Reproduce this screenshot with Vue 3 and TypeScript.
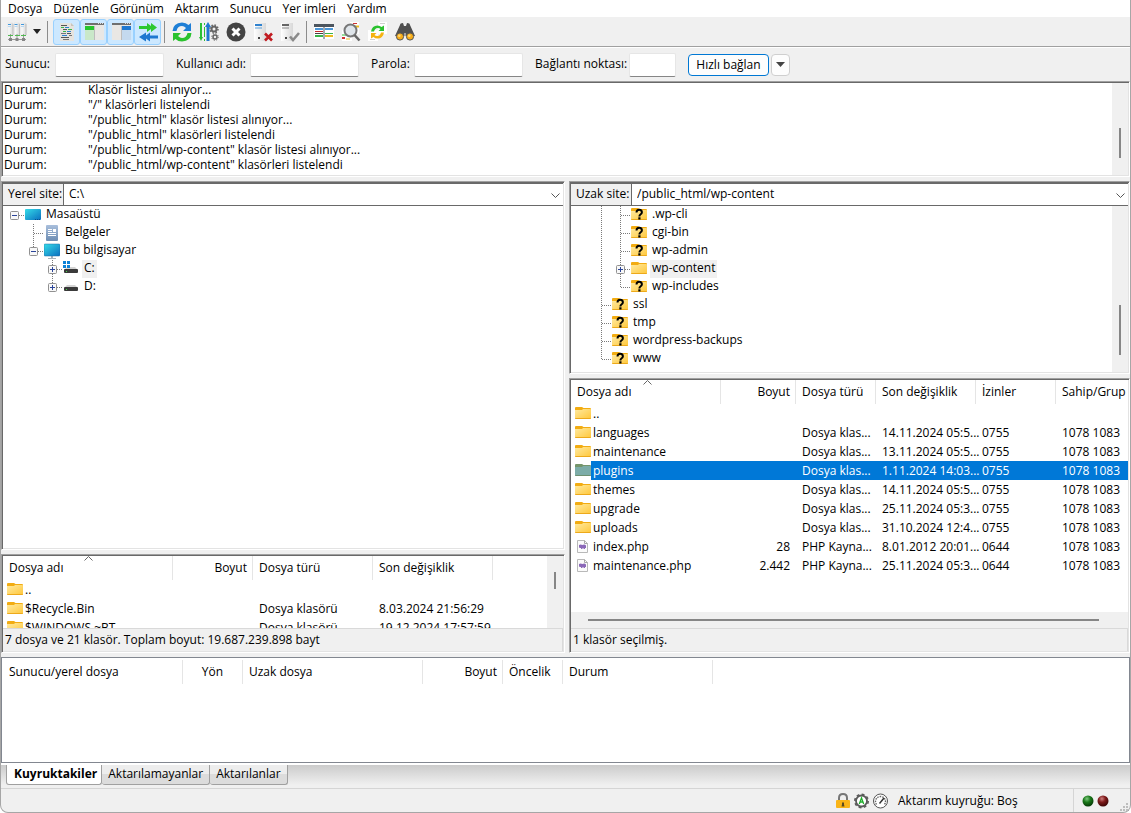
<script setup lang="ts">
import { ref } from 'vue'

interface LogLine { kind: string; text: string }
interface TreeRow {
  guides: string[]
  icon: string
  label: string
  selected?: boolean
}
interface FileRow {
  icon: string
  name: string
  size: string
  type: string
  date: string
  perms?: string
  owner?: string
  selected?: boolean
}

const menus: string[] = ['Dosya', 'Düzenle', 'Görünüm', 'Aktarım', 'Sunucu', 'Yer imleri', 'Yardım']

const toggles = ref([
  { icon: 'log', title: 'Günlük', on: true },
  { icon: 'local', title: 'Yerel klasör ağacı', on: true },
  { icon: 'remote', title: 'Uzak klasör ağacı', on: true },
  { icon: 'queue', title: 'Aktarım kuyruğu', on: true },
])
const actions = [
  { icon: 'refresh', title: 'Yenile' },
  { icon: 'process', title: 'Kuyruğu işle' },
  { icon: 'cancel', title: 'İptal' },
  { icon: 'disconnect', title: 'Bağlantıyı kes' },
  { icon: 'reconnect', title: 'Yeniden bağlan' },
]
const tools = [
  { icon: 'filter', title: 'Süzgeçler' },
  { icon: 'compare', title: 'Karşılaştır' },
  { icon: 'sync', title: 'Eşzamanlı gezinme' },
  { icon: 'find', title: 'Ara' },
]

const fields = [
  { id: 'host', label: 'Sunucu:', type: 'text' },
  { id: 'user', label: 'Kullanıcı adı:', type: 'text' },
  { id: 'pass', label: 'Parola:', type: 'password' },
  { id: 'port', label: 'Bağlantı noktası:', type: 'text' },
]

const log: LogLine[] = [
  { kind: 'Durum:', text: 'Klasör listesi alınıyor...' },
  { kind: 'Durum:', text: '"/" klasörleri listelendi' },
  { kind: 'Durum:', text: '"/public_html" klasör listesi alınıyor...' },
  { kind: 'Durum:', text: '"/public_html" klasörleri listelendi' },
  { kind: 'Durum:', text: '"/public_html/wp-content" klasör listesi alınıyor...' },
  { kind: 'Durum:', text: '"/public_html/wp-content" klasörleri listelendi' },
]

const localTree: TreeRow[] = [
  { guides: ['minus-root'], icon: 'desktop', label: 'Masaüstü' },
  { guides: ['none', 'tee'], icon: 'docs', label: 'Belgeler' },
  { guides: ['none', 'minus-end'], icon: 'pc', label: 'Bu bilgisayar' },
  { guides: ['none', 'none', 'plus-tee'], icon: 'drivec', label: 'C:', selected: true },
  { guides: ['none', 'none', 'plus-end'], icon: 'drived', label: 'D:' },
]
const remoteTree: TreeRow[] = [
  { guides: ['line', 'tee'], icon: 'unknown', label: '.wp-cli' },
  { guides: ['line', 'tee'], icon: 'unknown', label: 'cgi-bin' },
  { guides: ['line', 'tee'], icon: 'unknown', label: 'wp-admin' },
  { guides: ['line', 'plus-tee'], icon: 'folder', label: 'wp-content', selected: true },
  { guides: ['line', 'end'], icon: 'unknown', label: 'wp-includes' },
  { guides: ['tee'], icon: 'unknown', label: 'ssl' },
  { guides: ['tee'], icon: 'unknown', label: 'tmp' },
  { guides: ['tee'], icon: 'unknown', label: 'wordpress-backups' },
  { guides: ['end'], icon: 'unknown', label: 'www' },
]

const localFiles: FileRow[] = [
  { icon: 'folder', name: '..', size: '', type: '', date: '' },
  { icon: 'folder', name: '$Recycle.Bin', size: '', type: 'Dosya klasörü', date: '8.03.2024 21:56:29' },
  { icon: 'folder', name: '$WINDOWS.~BT', size: '', type: 'Dosya klasörü', date: '19.12.2024 17:57:59' },
]
const dir = 'Dosya klas...'
const php = 'PHP Kayna...'
const owner = '1078 1083'
const remoteFiles: FileRow[] = [
  { icon: 'folder', name: '..', size: '', type: '', date: '' },
  { icon: 'folder', name: 'languages', size: '', type: dir, date: '14.11.2024 05:5...', perms: '0755', owner },
  { icon: 'folder', name: 'maintenance', size: '', type: dir, date: '13.11.2024 05:5...', perms: '0755', owner },
  { icon: 'folder-sel', name: 'plugins', size: '', type: dir, date: '1.11.2024 14:03...', perms: '0755', owner, selected: true },
  { icon: 'folder', name: 'themes', size: '', type: dir, date: '14.11.2024 05:5...', perms: '0755', owner },
  { icon: 'folder', name: 'upgrade', size: '', type: dir, date: '25.11.2024 05:3...', perms: '0755', owner },
  { icon: 'folder', name: 'uploads', size: '', type: dir, date: '31.10.2024 12:4...', perms: '0755', owner },
  { icon: 'php', name: 'index.php', size: '28', type: php, date: '8.01.2012 20:01...', perms: '0644', owner },
  { icon: 'php', name: 'maintenance.php', size: '2.442', type: php, date: '25.11.2024 05:3...', perms: '0644', owner },
]

const tabs = ['Kuyruktakiler', 'Aktarılamayanlar', 'Aktarılanlar']
const activeTab = ref(0)
</script>

<template>
  <svg class="defs" width="0" height="0" aria-hidden="true">
    <defs>
      <linearGradient id="g-folder" x1="0" y1="0" x2="1" y2="1">
        <stop offset="0" stop-color="#ffeaa0" /><stop offset="1" stop-color="#ffc73a" />
      </linearGradient>
      <linearGradient id="g-screen" x1="0" y1="0" x2="1" y2="1">
        <stop offset="0" stop-color="#35dce8" /><stop offset="1" stop-color="#0a6fc0" />
      </linearGradient>
      <linearGradient id="g-doc" x1="0" y1="0" x2="0" y2="1">
        <stop offset="0" stop-color="#a9bfdc" /><stop offset="1" stop-color="#6d8db3" />
      </linearGradient>
      <radialGradient id="g-green" cx=".4" cy=".3" r=".7">
        <stop offset="0" stop-color="#7fc87f" /><stop offset=".45" stop-color="#1b7a1b" /><stop offset="1" stop-color="#063a06" />
      </radialGradient>
      <radialGradient id="g-red" cx=".4" cy=".3" r=".7">
        <stop offset="0" stop-color="#cf8080" /><stop offset=".45" stop-color="#7f1b1b" /><stop offset="1" stop-color="#3c0505" />
      </radialGradient>
      <linearGradient id="g-server" x1="0" y1="0" x2="1" y2="0">
        <stop offset="0" stop-color="#ffffff" /><stop offset="1" stop-color="#d8d8d8" />
      </linearGradient>
    </defs>

    <symbol id="i-folder" viewBox="0 0 16 16">
      <path d="M0 2q0-1 1-1h6l1.500 1H15q1 0 1 1v3H0z" fill="#f2ac12" />
      <path d="M0 4h7l1-1h7.500l.5.500V12q0 1-1 1H1q-1 0-1-1z" fill="url(#g-folder)" />
      <path d="M0 12h16q0 1-1 1H1q-1 0-1-1z" fill="#eda91a" />
    </symbol>
    <symbol id="i-folder-sel" viewBox="0 0 16 16">
      <path d="M0 2q0-1 1-1h6l1.500 1H15q1 0 1 1v3H0z" fill="#75956b" />
      <path d="M0 4h7l1-1h7.500l.5.500V12q0 1-1 1H1q-1 0-1-1z" fill="#7caca8" />
      <path d="M0 12h16q0 1-1 1H1q-1 0-1-1z" fill="#6d9070" />
    </symbol>
    <symbol id="i-unknown" viewBox="0 0 16 16">
      <use href="#i-folder" />
      <path d="M5.500 5.500Q5.500 2.700 8.200 2.700t2.700 2.500q0 1.400-1.500 2.300-1 .7-1 2" fill="none" stroke="#000" stroke-width="2" />
      <rect x="7.300" y="10.300" width="2.200" height="2.200" />
    </symbol>
    <symbol id="i-desktop" viewBox="0 0 16 16">
      <rect x="0" y="2" width="16" height="11" rx="1" fill="url(#g-screen)" />
      <path d="M10 12.500h1m1 0h1m1 0h1" stroke="#0a4f88" />
    </symbol>
    <symbol id="i-pc" viewBox="0 0 16 16">
      <path d="M7 13h2v2h3v1H4v-1h3z" fill="#a9b4bd" />
      <rect x="0" y="1" width="16" height="12" rx="1" fill="url(#g-screen)" stroke="#1c6ea5" stroke-width=".5" />
    </symbol>
    <symbol id="i-docs" viewBox="0 0 16 16">
      <rect x="2" y="0" width="12" height="16" rx="1" fill="url(#g-doc)" />
      <path d="M4 4.500h4M4 6.500h4M4 8.500h8M4 10.500h8" stroke="#fff" />
      <rect x="9" y="4" width="3" height="3" fill="#fff" />
    </symbol>
    <symbol id="i-drived" viewBox="0 0 16 16">
      <path d="M4 6h8l3 3H1z" fill="#d4d4d4" />
      <rect x="1" y="8" width="14" height="4" rx="1" fill="#3a3a3a" />
      <rect x="3" y="10" width="1" height="1" fill="#47d847" />
    </symbol>
    <symbol id="i-drivec" viewBox="0 0 16 16">
      <use href="#i-drived" />
      <path d="M0 0h3v3H0zM4 0h3v3H4zM0 4h3v3H0zM4 4h3v3H4z" fill="#0c82d8" />
    </symbol>
    <symbol id="i-php" viewBox="0 0 16 16">
      <path d="M2.500 1.500h7l3 3v9h-10z" fill="#fbfbfb" stroke="#b9b9b9" />
      <path d="M9.500 1.500v3h3" fill="none" stroke="#a8a8a8" />
      <path d="M4 6q1.500-1 3.500 0 2-1 3.500.5V9h-1v1H8.500V9h-1v1H6V9H5Q4 9 4 8z" fill="#8b68b8" />
    </symbol>

    <symbol id="i-sites" viewBox="0 0 20 20">
      <g fill="url(#g-server)" stroke="#dcdcdc" stroke-width=".5">
        <rect x="1" y="1" width="5" height="12" /><rect x="7.500" y="1" width="5" height="12" /><rect x="14" y="1" width="5" height="12" />
      </g>
      <path d="M1 2.500h3M7.500 2.500h3M14 2.500h3" stroke="#3f97dc" />
      <path d="M1 4.500h3M7.500 4.500h3M14 4.500h3" stroke="#b5d5ef" />
      <path d="M6 2v11M12.500 2v11M19 2v11" stroke="#bdbdbd" />
      <path d="M3.500 12v6M10 12v6M16.500 12v6M1 17.500h18" stroke="#9a9a9a" fill="none" />
      <path d="M1 13.500h5M8 13.500h5M14 13.500h5" stroke="#50ba50" />
      <path d="M2 16h3v3H2zM8.500 16h3v3h-3zM15 16h3v3h-3z" fill="#858585" />
    </symbol>
    <symbol id="i-log" viewBox="0 0 20 20">
      <path d="M3 1h11l3 3v15H3z" fill="#e6e3de" />
      <path d="M14 1v3h3" fill="#c9c4bc" />
      <path d="M4 3.500h6M6 7.500h4M10 11.500h4M4 15.500h8" stroke="#555" />
      <path d="M4 5.500h3M11 7.500h4M6 9.500h3" stroke="#39b54a" />
      <path d="M8 5.500h4M10 9.500h4M5 13.500h5" stroke="#2f7fcb" />
      <path d="M4 11.500h5M12 13.500h3M6 17.500h6" stroke="#777" />
    </symbol>
    <symbol id="i-local" viewBox="0 0 20 20">
      <rect x="1" y="1" width="19" height="17" fill="#e9e7e4" />
      <rect x="1" y="1" width="19" height="2" fill="#6f6f6f" />
      <path d="M14 1.500h1m1 0h1m1 0h1" stroke="#ddd" />
      <rect x="1" y="4" width="9" height="4" fill="#26c52e" />
      <rect x="1" y="8" width="9" height="10" fill="#c9e8c9" />
      <rect x="10" y="4" width="1" height="14" fill="#bdbdbd" />
    </symbol>
    <symbol id="i-remote" viewBox="0 0 20 20">
      <rect x="1" y="1" width="19" height="17" fill="#e9e7e4" />
      <rect x="1" y="1" width="19" height="2" fill="#6f6f6f" />
      <path d="M14 1.500h1m1 0h1m1 0h1" stroke="#ddd" />
      <rect x="11" y="4" width="9" height="4" fill="#1f78d0" />
      <rect x="11" y="8" width="9" height="10" fill="#c4d9ee" />
      <rect x="10" y="4" width="1" height="14" fill="#bdbdbd" />
    </symbol>
    <symbol id="i-queue" viewBox="0 0 20 20">
      <path d="M1 4h8V1l4 3V1l6 4.500-6 4.500V7l-4 3V7H1z" fill="#2cc830" />
      <path d="M20 13.500h-8v-3l-4 3v-3L1 15l7 4.500v-3l4 3v-3h8z" fill="#1f78d0" />
    </symbol>
    <symbol id="i-refresh" viewBox="0 0 20 20">
      <path d="M.5 9Q1 1 10 .5q4 0 6.500 2.500L19 1v8h-8l3-3Q12 4 10 4 5.500 4 4.500 9z" fill="#1f7fd6" />
      <path d="M19.500 11Q19 19 10 19.500q-4 0-6.500-2.500L1 19v-8h8l-3 3q2 2 4 2 4.500 0 5.500-5z" fill="#2bc22f" />
    </symbol>
    <symbol id="i-process" viewBox="0 0 20 20">
      <path d="M2 1v15" stroke="#2bbf35" stroke-width="2" /><path d="M0 15h4l-2 4z" fill="#2bbf35" />
      <path d="M5.500 1v2m0 2v10m0 2v2" stroke="#2bbf35" />
      <path d="M9 4v15" stroke="#1f78d0" stroke-width="3" /><path d="M6 5l3-5 3 5z" fill="#1f78d0" />
      <circle cx="15" cy="7" r="2.500" fill="none" stroke="#656565" stroke-width="2" />
      <circle cx="15" cy="7" r="4" fill="none" stroke="#656565" stroke-width="1.500" stroke-dasharray="1.500 1.640" />
      <circle cx="16" cy="15" r="2" fill="none" stroke="#656565" stroke-width="1.500" />
      <circle cx="16" cy="15" r="3.300" fill="none" stroke="#656565" stroke-dasharray="1.200 1.400" />
    </symbol>
    <symbol id="i-cancel" viewBox="0 0 20 20">
      <circle cx="10" cy="10" r="9.500" fill="#444" />
      <path d="M6.500 6.500l7 7m0-7l-7 7" stroke="#fff" stroke-width="3" />
    </symbol>
    <symbol id="i-disconnect" viewBox="0 0 20 20">
      <rect x="1" y="1" width="12" height="18" fill="url(#g-server)" />
      <path d="M2 3h7" stroke="#2f82cf" stroke-width="2" /><path d="M2 6h7" stroke="#5b9fd9" />
      <rect x="5" y="15" width="2" height="2" fill="#444" />
      <path d="M12 11.500l7 7m0-7l-7 7" stroke="#c11a20" stroke-width="2.600" />
    </symbol>
    <symbol id="i-reconnect" viewBox="0 0 20 20">
      <rect x="1" y="1" width="12" height="18" fill="url(#g-server)" />
      <path d="M2 3h7" stroke="#666" stroke-width="2" /><path d="M2 6h7" stroke="#888" />
      <rect x="5" y="15" width="2" height="2" fill="#444" />
      <path d="M10 14.500l3 3.500 6-7" fill="none" stroke="#8a8a8a" stroke-width="2.600" />
    </symbol>
    <symbol id="i-filter" viewBox="0 0 20 20">
      <rect x="0" y="3" width="20" height="14" fill="#fff" />
      <rect x="0" y="2" width="20" height="3" fill="#4d555e" />
      <path d="M1 7h8" stroke="#4b96d8" stroke-width="2" /><path d="M1 9.500h8" stroke="#c22a2a" />
      <path d="M1 11.500h8" stroke="#444" /><path d="M1 14h8" stroke="#39b54a" stroke-width="2" />
      <path d="M11 7h8" stroke="#4b96d8" stroke-width="2" /><path d="M11 11.500h8" stroke="#39b54a" /><path d="M11 14h8" stroke="#eab91e" stroke-width="2" />
      <path d="M10 4v13" stroke="#4d555e" />
    </symbol>
    <symbol id="i-compare" viewBox="0 0 20 20">
      <rect x="9" y="0" width="9" height="12" fill="#fff" /><rect x="1" y="8" width="10" height="11" fill="#fff" />
      <path d="M12 1.500h4" stroke="#d33232" /><path d="M13 4.500h5" stroke="#eab91e" stroke-width="2" />
      <path d="M1 13h5" stroke="#2bbf35" /><path d="M1 16h3" stroke="#d33232" stroke-width="2" /><path d="M5 17h4" stroke="#eab91e" />
      <circle cx="9.500" cy="8.500" r="6" fill="#dfe5ea" stroke="#777" stroke-width="2" />
      <path d="M13.500 13l5 5.500" stroke="#666" stroke-width="2.600" />
    </symbol>
    <symbol id="i-sync" viewBox="0 0 20 20">
      <rect x="10" y="0" width="9" height="12" fill="#fff" /><rect x="0" y="8" width="10" height="11" fill="#fff" />
      <path d="M2 17.500h5M12 1.500h5" stroke="#cfcfcf" />
      <path d="M3 9.500Q4 3.500 9.500 3.500q2.500 0 4 1.500L16 3.500V9h-5.500l2-2q-1-1-3-1-2.500 0-3.500 3.500z" fill="#2bc22f" />
      <path d="M16 10.500q-1 6-6.500 6-2.500 0-4-1.500L3 16.500V11h5.500l-2 2q1 1 3 1 2.500 0 3.500-3.500z" fill="#f5b312" />
    </symbol>
    <symbol id="i-find" viewBox="0 0 20 20">
      <path d="M5 3q0-2 3-2l1 3h2l1-3q3 0 3 2l5 11H10.500v-3h-1v3H0z" fill="#505050" />
      <circle cx="5" cy="14.500" r="3.600" fill="#f8ae1a" stroke="#555" /><circle cx="15" cy="14.500" r="3.600" fill="#f8ae1a" stroke="#555" />
      <circle cx="4.300" cy="13.800" r="1.300" fill="#ffd773" /><circle cx="14.300" cy="13.800" r="1.300" fill="#ffd773" />
    </symbol>
  </svg>

  <div class="window">
    <nav class="menubar" aria-label="Menü">
      <button v-for="m in menus" :key="m" type="button">{{ m }}</button>
    </nav>

    <div class="toolbar" role="toolbar">
      <button class="tool" type="button" title="Site yöneticisi"><svg class="ico"><use href="#i-sites" /></svg></button>
      <button class="tool drop" type="button" title="Siteler">
        <svg width="8" height="5" viewBox="0 0 8 5"><path d="M0 0h8L4 5z" fill="#222" /></svg>
      </button>
      <i class="sep first"></i>
      <button
        v-for="t in toggles" :key="t.icon" class="tool toggle" :class="{ on: t.on }"
        type="button" :title="t.title" :aria-pressed="t.on" @click="t.on = !t.on"
      ><svg class="ico"><use :href="'#i-' + t.icon" /></svg></button>
      <i class="sep"></i>
      <button v-for="t in actions" :key="t.icon" class="tool" type="button" :title="t.title">
        <svg class="ico"><use :href="'#i-' + t.icon" /></svg>
      </button>
      <i class="sep"></i>
      <button v-for="t in tools" :key="t.icon" class="tool" type="button" :title="t.title">
        <svg class="ico"><use :href="'#i-' + t.icon" /></svg>
      </button>
    </div>

    <form class="quick" @submit.prevent>
      <div v-for="f in fields" :key="f.id" class="field" :class="f.id">
        <label :for="f.id">{{ f.label }}</label>
        <input :id="f.id" :type="f.type">
      </div>
      <button class="connect" type="submit">Hızlı bağlan</button>
      <button class="history" type="button" title="Geçmiş">
        <svg width="9" height="5" viewBox="0 0 9 5"><path d="M0 0h9L4.500 5z" fill="#444" /></svg>
      </button>
    </form>

    <section class="sunken log">
      <div class="lines">
        <p v-for="(l, i) in log" :key="i"><span>{{ l.kind }}</span>{{ l.text }}</p>
      </div>
      <div class="vscroll"><i class="thumb log-thumb"></i></div>
    </section>

    <main class="panes">
      <div class="side local">
        <section class="sunken pane">
          <div class="sitebar">
            <label for="local-path">Yerel site:</label>
            <div class="combo">
              <select id="local-path"><option>C:\</option></select>
              <svg class="chev" width="9" height="5" viewBox="0 0 9 5"><path d="M.5.500l4 4 4-4" fill="none" stroke="#555" /></svg>
            </div>
          </div>
          <div class="body">
            <ul class="tree">
              <li v-for="r in localTree" :key="r.label">
                <svg v-for="(g, i) in r.guides" :key="i" class="guide" viewBox="0 0 19 18">
                  <g stroke="#7a7a7a" stroke-dasharray="1 1">
                    <path v-if="g === 'line' || g === 'tee' || g === 'plus-tee'" d="M9.500 0v18" />
                    <path v-if="g === 'end' || g === 'plus-end' || g === 'minus-end'" d="M9.500 0v9" />
                    <path v-if="g !== 'line' && g !== 'none'" d="M10 9.500h9" />
                  </g>
                  <template v-if="g.startsWith('plus') || g.startsWith('minus')">
                    <rect x="5.500" y="5.500" width="8" height="8" rx="1" fill="#f8f8f8" stroke="#919191" />
                    <path d="M7 9.500h5" stroke="#2b459a" />
                    <path v-if="g.startsWith('plus')" d="M9.500 7v5" stroke="#2b459a" />
                  </template>
                </svg>
                <svg class="node"><use :href="'#i-' + r.icon" /></svg>
                <span :class="{ sel: r.selected }">{{ r.label }}</span>
              </li>
            </ul>
          </div>
        </section>

        <section class="sunken pane">
          <div class="body">
            <div class="scroller">
              <table>
                <colgroup><col class="w170"><col class="w80"><col class="w120"><col class="w120"><col></colgroup>
                <thead>
                  <tr>
                    <th>Dosya adı<svg class="sort" width="9" height="5" viewBox="0 0 9 5"><path d="M.5 4.500l4-4 4 4" fill="none" stroke="#666" /></svg></th>
                    <th class="num">Boyut</th><th>Dosya türü</th><th>Son değişiklik</th><th class="rest"></th>
                  </tr>
                </thead>
                <tbody>
                  <tr v-for="f in localFiles" :key="f.name">
                    <td class="name"><div><svg class="node"><use :href="'#i-' + f.icon" /></svg><span>{{ f.name }}</span></div></td>
                    <td class="num">{{ f.size }}</td><td>{{ f.type }}</td><td>{{ f.date }}</td><td></td>
                  </tr>
                </tbody>
              </table>
            </div>
            <div class="vscroll"><i class="thumb list-thumb"></i></div>
          </div>
          <p class="summary">7 dosya ve 21 klasör. Toplam boyut: 19.687.239.898 bayt</p>
        </section>
      </div>

      <div class="side remote">
        <section class="sunken pane">
          <div class="sitebar">
            <label for="remote-path">Uzak site:</label>
            <div class="combo">
              <select id="remote-path"><option>/public_html/wp-content</option></select>
              <svg class="chev" width="9" height="5" viewBox="0 0 9 5"><path d="M.5.500l4 4 4-4" fill="none" stroke="#555" /></svg>
            </div>
          </div>
          <div class="body">
            <ul class="tree deep">
              <li v-for="r in remoteTree" :key="r.label">
                <svg v-for="(g, i) in r.guides" :key="i" class="guide" viewBox="0 0 19 18">
                  <g stroke="#7a7a7a" stroke-dasharray="1 1">
                    <path v-if="g === 'line' || g === 'tee' || g === 'plus-tee'" d="M9.500 0v18" />
                    <path v-if="g === 'end'" d="M9.500 0v9" />
                    <path v-if="g !== 'line' && g !== 'none'" d="M10 9.500h9" />
                  </g>
                  <template v-if="g.startsWith('plus')">
                    <rect x="5.500" y="5.500" width="8" height="8" rx="1" fill="#f8f8f8" stroke="#919191" />
                    <path d="M7 9.500h5M9.500 7v5" stroke="#2b459a" />
                  </template>
                </svg>
                <svg class="node"><use :href="'#i-' + r.icon" /></svg>
                <span :class="{ sel: r.selected }">{{ r.label }}</span>
              </li>
            </ul>
            <div class="vscroll"><i class="thumb tree-thumb"></i></div>
          </div>
        </section>

        <section class="sunken pane">
          <div class="body">
            <div class="scroller">
              <table>
                <colgroup><col class="w150"><col class="w75"><col class="w80"><col class="w100"><col class="w80"><col></colgroup>
                <thead>
                  <tr>
                    <th>Dosya adı<svg class="sort" width="9" height="5" viewBox="0 0 9 5"><path d="M.5 4.500l4-4 4 4" fill="none" stroke="#666" /></svg></th>
                    <th class="num">Boyut</th><th>Dosya türü</th><th>Son değişiklik</th><th>İzinler</th><th class="rest">Sahip/Grup</th>
                  </tr>
                </thead>
                <tbody>
                  <tr v-for="f in remoteFiles" :key="f.name" :class="{ picked: f.selected }">
                    <td class="name"><div><svg class="node"><use :href="'#i-' + f.icon" /></svg><span>{{ f.name }}</span></div></td>
                    <td class="num">{{ f.size }}</td><td>{{ f.type }}</td><td>{{ f.date }}</td>
                    <td>{{ f.perms }}</td><td>{{ f.owner }}</td>
                  </tr>
                </tbody>
              </table>
            </div>
          </div>
          <div class="hscroll"><i></i></div>
          <p class="summary">1 klasör seçilmiş.</p>
        </section>
      </div>
    </main>

    <section class="transfers">
      <table>
        <colgroup><col class="w180"><col class="w60"><col class="w180"><col class="w80"><col class="w60"><col class="w150"><col></colgroup>
        <thead>
          <tr>
            <th>Sunucu/yerel dosya</th><th class="mid">Yön</th><th>Uzak dosya</th><th class="num">Boyut</th>
            <th>Öncelik</th><th>Durum</th><th class="rest"></th>
          </tr>
        </thead>
      </table>
    </section>

    <div class="tabs" role="tablist">
      <button
        v-for="(t, i) in tabs" :key="t" type="button" role="tab"
        :aria-selected="activeTab === i" :class="{ active: activeTab === i }" @click="activeTab = i"
      >{{ t }}</button>
    </div>

    <footer class="statusbar">
      <svg width="54" height="16" viewBox="0 0 54 16">
        <path d="M4 7V5q0-4 4-4t4 4v2" fill="none" stroke="#777" stroke-width="2" />
        <rect x="1" y="7" width="14" height="8" rx="1" fill="#f9b418" />
        <path d="M7 9.500h2v2l.5 2h-3l.5-2z" fill="#5a4a20" />
        <circle cx="26.500" cy="8" r="5.500" fill="#fff" stroke="#5a5a5a" stroke-width="1.800" />
        <circle cx="26.500" cy="8" r="6.700" fill="none" stroke="#5a5a5a" stroke-width="1.600" stroke-dasharray="2.800 2.460" />
        <path d="M24.300 11l2.200-6 2.200 6m-3.500-2h2.600" fill="none" stroke="#1fae2c" stroke-width="1.300" />
        <circle cx="45.500" cy="8" r="7" fill="#fff" stroke="#555" />
        <path d="M41.500 11.500a5 5 0 1 1 8 0" fill="none" stroke="#666" stroke-width="1.400" stroke-dasharray="1.500 1" />
        <path d="M44.500 10.500L49 5" stroke="#333" stroke-width="1.500" />
      </svg>
      <span class="queue-state">Aktarım kuyruğu: Boş</span>
      <svg class="leds" width="28" height="12" viewBox="0 0 28 12">
        <circle cx="6" cy="6" r="5.500" fill="url(#g-green)" /><circle cx="21" cy="6" r="5.500" fill="url(#g-red)" />
      </svg>
      <svg class="grip" width="9" height="9" viewBox="0 0 9 9">
        <path d="M6 0h2v2H6zM3 3h2v2H3zM6 3h2v2H6zM0 6h2v2H0zM3 6h2v2H3zM6 6h2v2H6z" fill="#bdbdbd" />
      </svg>
    </footer>
  </div>
</template>

<style>
html, body { background: #fff; }
</style>

<style scoped>
.defs { position: absolute; }
.window {
  box-sizing: border-box;
  display: flex;
  flex-direction: column;
  height: 100vh;
  min-height: 640px;
  min-width: 900px;
  border: solid #a6a6a6;
  border-width: 0 1px 1px;
  border-radius: 0 0 8px 8px;
  overflow: hidden;
  background: #f0f0f0;
  color: #000;
  font: 12px/16px "Open Sans", "Noto Sans", sans-serif;
}
button, input, select { font: inherit; color: inherit; margin: 0; }
button { padding: 0; border: 0; background: none; }
p, ul { margin: 0; padding: 0; list-style: none; }
svg { flex: none; display: block; }

.menubar { display: flex; gap: 11px; height: 17px; padding-left: 7px; background: #fff; }

.toolbar { display: flex; align-items: center; height: 29px; padding: 0 2px; border-bottom: 1px solid #a0a0a0; }
.tool { display: flex; align-items: center; justify-content: center; width: 27px; height: 26px; box-sizing: border-box; }
.tool.drop { width: 14px; }
.toggle.on { border: 1px solid #99d1ff; border-radius: 3px; background: #cce8ff; }
.sep { width: 1px; height: 22px; margin: 0 3px; background: #8c8c8c; }
.sep.first { margin-right: 5px; }
.ico { width: 20px; height: 20px; }

.quick { display: flex; align-items: center; height: 33px; padding-left: 4px; border-top: 1px solid #fff; }
.field { display: flex; align-items: center; margin-right: 12px; }
.field label { white-space: nowrap; width: 50px; padding-bottom: 2px; }
.field.user label { width: 74px; }
.field.pass label { width: 43px; }
.field.port label { width: 94px; }
.field input {
  box-sizing: border-box; width: 109px; height: 24px; padding: 2px 4px;
  border: 1px solid #e6e6e6; border-bottom-color: #868686; border-radius: 2px; background: #fff;
}
.field.port input { width: 47px; }
.connect { width: 81px; height: 22px; border: 1px solid #0078d4; border-radius: 4px; background: #fdfdfd; white-space: nowrap; box-sizing: border-box; }
.history {
  display: flex; align-items: center; justify-content: center; box-sizing: border-box;
  width: 19px; height: 22px; margin-left: 2px; border: 1px solid #cfcfcf; border-radius: 4px; background: #fdfdfd;
}

.sunken {
  box-sizing: border-box; padding: 1px; border: 1px solid; border-color: #a0a0a0 #fff #fff #a0a0a0;
  background: #fff; box-shadow: inset 1px 1px #696969, inset -1px -1px #e3e3e3;
}
.log { display: flex; flex: none; margin-bottom: 4px; }
.lines { flex: 1; padding-bottom: 2px; }
.lines p { display: flex; line-height: 13px; padding: 0 0 2px 1px; white-space: pre; }
.lines span { width: 84px; }
.vscroll { flex: none; width: 16px; background: #f0f0f0; }
.thumb { display: block; width: 2px; margin: 0 auto; background: #868686; }
.log-thumb { height: 30px; margin-top: 45px; }
.tree-thumb { height: 50px; margin-top: 99px; }
.list-thumb { height: 17px; margin-top: 16px; }

.panes { flex: 1; min-height: 0; display: grid; grid-template-columns: 564fr 561fr; gap: 4px; margin-bottom: 4px; }
.side { display: grid; gap: 4px; min-height: 0; min-width: 0; }
.local { grid-template-rows: minmax(0, 1fr) 99px; }
.remote { grid-template-rows: 193fr 275fr; }
.pane { display: flex; flex-direction: column; min-height: 0; min-width: 0; overflow: hidden; }
.sitebar { display: flex; flex: none; height: 23px; border: solid #696969; border-width: 1px 0; box-sizing: border-box; }
.sitebar label { flex: none; width: 61px; padding-left: 5px; line-height: 20px; background: #f0f0f0; border-right: 1px solid #696969; box-sizing: border-box; white-space: nowrap; }
.combo { position: relative; flex: 1; display: flex; }
.combo select { flex: 1; border: 0; padding: 0 20px 2px 5px; background: #fff; appearance: none; outline: 0; }
.chev { position: absolute; right: 3px; top: 9px; pointer-events: none; }
.body { flex: 1; display: flex; min-height: 0; }
.scroller { flex: 1; min-width: 0; overflow: hidden; }

.tree { flex: 1; overflow: hidden; padding-left: 2px; }
.tree.deep { padding-left: 21px; }
.tree li { display: flex; align-items: center; height: 18px; }
.guide { width: 19px; height: 18px; }
.node { width: 16px; height: 16px; }
.tree .node { margin: 0 3px 0 1px; }
.tree span { padding: 0 2px 2px; line-height: 16px; }
.tree .sel { background: #f0f0f0; }

table { width: 100%; table-layout: fixed; border-collapse: separate; border-spacing: 0; }
th, td { padding: 0 0 0 6px; text-align: left; font-weight: 400; white-space: nowrap; }
th { position: relative; height: 24px; box-sizing: border-box; border-right: 1px solid #e5e5e5; }
th.rest { border-right: 0; }
td { height: 19px; line-height: 19px; }
th.num { padding-right: 5px; text-align: right; }
td.num { padding-right: 6px; text-align: right; }
th.mid { padding: 0; text-align: center; }
td.name { padding: 0; }
.name div { display: flex; align-items: center; height: 19px; padding-left: 4px; }
.name span { flex: 1; padding-left: 2px; }
.picked td { background: #0078d7; color: #fff; }
.picked td.name { background: none; }
.picked .name span { background: #0078d7; }
.sort { position: absolute; top: 0; left: 48%; }
.w60 { width: 60px; } .w75 { width: 75px; } .w80 { width: 80px; } .w100 { width: 100px; }
.w120 { width: 120px; } .w150 { width: 150px; } .w170 { width: 170px; } .w180 { width: 180px; }

.hscroll { flex: none; height: 16px; padding: 7px 29px 7px 17px; background: #f0f0f0; box-sizing: border-box; }
.hscroll i { display: block; height: 2px; background: #868686; }
.summary { flex: none; height: 22px; padding-left: 2px; line-height: 22px; background: #f0f0f0; border-top: 1px solid #d9d9d9; box-shadow: inset -1px 0 #d9d9d9; }

.transfers { flex: none; height: 106px; padding: 2px 0 0 1px; box-sizing: border-box; border: 1px solid #828790; background: #fff; }
.tabs { display: flex; flex: none; height: 26px; padding: 2px 5px 3px; box-sizing: border-box; background: linear-gradient(#fff 0 2px, #cbcbcb 2px, #f0f0f0 22px); border-bottom: 1px solid #d5d5d5; }
.tabs button { padding: 0 6px 2px; border: 1px solid #a0a0a0; border-top: 0; border-left-width: 0; border-radius: 0 0 3px 3px; background: linear-gradient(#ededed 45%, #dcdcdc 50%); white-space: nowrap; }
.tabs button.active { padding: 0 4px 2px 7px; border-left-width: 1px; background: #fff; font-weight: 700; }

.statusbar { display: flex; flex: none; align-items: center; justify-content: flex-end; height: 23px; }
.queue-state { padding: 1px 0 0 9px; width: 175px; border-right: 1px solid #d5d5d5; line-height: 22px; }
.leds { margin: 0 10px 0 8px; }
.grip { align-self: flex-end; margin-right: 1px; }
</style>
